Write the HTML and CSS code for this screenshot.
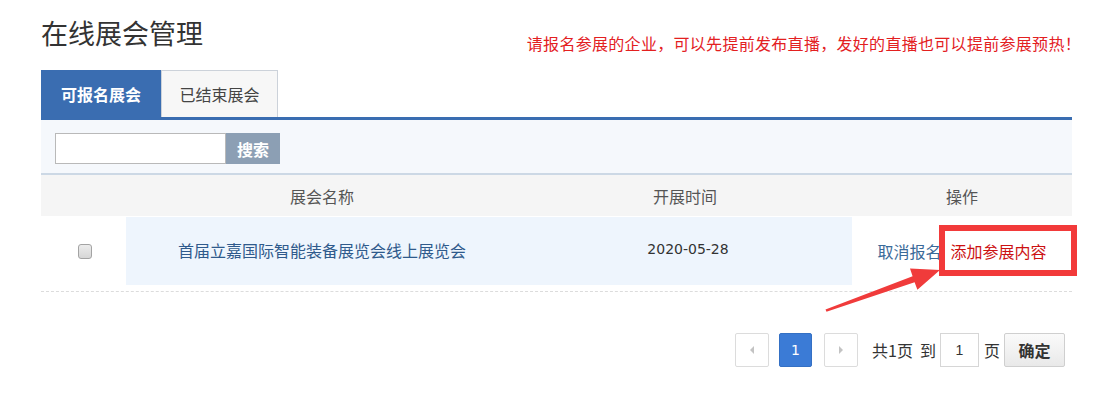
FILE: index.html
```html
<!DOCTYPE html>
<html lang="zh-CN">
<head>
<meta charset="utf-8">
<title>在线展会管理</title>
<link rel="stylesheet" href="styles.css">
</head>
<body>
<div class="page">
  <div class="head">
    <h1 class="title">在线展会管理</h1>
    <p class="notice">请报名参展的企业，可以先提前发布直播，发好的直播也可以提前参展预热！</p>
  </div>
  <div class="tabs">
    <a class="tab tab-active">可报名展会</a>
    <a class="tab">已结束展会</a>
  </div>
  <div class="search">
    <input class="search-input" type="text">
    <button class="search-btn" type="button">搜索</button>
  </div>
  <div class="table">
    <div class="thead">
      <div class="cell"></div>
      <div class="cell">展会名称</div>
      <div class="cell">开展时间</div>
      <div class="cell">操作</div>
    </div>
    <div class="trow">
      <div class="cell"><input class="check" type="checkbox"></div>
      <div class="cell cell-tint"><a class="name-link">首届立嘉国际智能装备展览会线上展览会</a></div>
      <div class="cell cell-tint date">2020-05-28</div>
      <div class="cell ops">
        <a class="op-cancel">取消报名</a>
        <a class="op-add">添加参展内容<span class="mark"></span></a>
      </div>
    </div>
  </div>
  <div class="pager">
    <span class="pg-btn"><i class="tri tri-left"></i></span>
    <span class="pg-btn pg-cur">1</span>
    <span class="pg-btn"><i class="tri tri-right"></i></span>
    <span class="pg-text pg-total">共1页</span>
    <span class="pg-text">到</span>
    <input class="pg-input" type="text" value="1">
    <span class="pg-text">页</span>
    <button class="pg-ok" type="button">确定</button>
  </div>
  <svg class="arrow" width="160" height="80" viewBox="0 0 160 80">
    <polygon points="25.5,59.4 112.6,26.2 110,18.6 140,20 117.4,39.8 114.6,32.2 26.5,61.8" fill="#f03b3b"/>
  </svg>
</div>
</body>
</html>
```
FILE: styles.css
```css
* { box-sizing: border-box; }
html, body { margin: 0; padding: 0; background: #fff; }
body {
  font-family: "Microsoft YaHei", "Noto Sans CJK SC", "Liberation Sans", sans-serif;
  color: #333;
  font-size: 16px;
}
.page {
  position: relative;
  width: 1120px;
  height: 400px;
  padding-left: 41px;
}
.head {
  width: 1031px;
  height: 70px;
  padding-top: 18px;
  display: flex;
  justify-content: space-between;
  align-items: flex-start;
}
.title {
  margin: 0;
  font-size: 27px;
  font-weight: normal;
  line-height: 30px;
  color: #333;
}
.notice {
  margin: 14px -9px 0 0;
  font-size: 16px;
  line-height: 22px;
  color: #e3201f;
  letter-spacing: 0.3px;
}
.tabs {
  display: flex;
  height: 47px;
}
.tab {
  display: flex;
  align-items: center;
  justify-content: center;
  font-size: 16px;
  height: 47px;
}
.tab-active {
  width: 120px;
  background: #3a6db1;
  color: #fff;
  font-weight: bold;
}
.tab:not(.tab-active) {
  width: 117px;
  background: #f7f7f7;
  border: 1px solid #ccd2da;
  border-bottom: none;
  color: #444;
}
.search {
  width: 1031px;
  background: #f5f8fc;
  border-top: 3px solid #3a6db1;
  border-bottom: 2px solid #ccd8e5;
  padding: 13px 14px 9px;
  display: flex;
}
.search-input {
  width: 171px;
  height: 31px;
  margin: 0;
  border: 1px solid #b9b9b9;
  background: #fff;
  padding: 0 4px;
}
.search-btn {
  width: 54px;
  height: 31px;
  margin: 0;
  border: none;
  background: #8c9fb4;
  color: #fff;
  font-family: inherit;
  font-size: 16px;
  font-weight: bold;
  padding: 0;
}
.table { width: 1031px; }
.thead, .trow {
  display: grid;
  grid-template-columns: 85px 392px 334px 220px;
}
.thead {
  height: 41px;
  background: #f5f5f5;
  color: #555;
}
.thead .cell {
  display: flex;
  align-items: center;
  justify-content: center;
  font-size: 16px;
}
.trow {
  padding-top: 1px;
  padding-bottom: 6px;
  border-bottom: 1px dashed #dcdcdc;
}
.trow .cell {
  height: 68px;
  display: flex;
  align-items: center;
  justify-content: center;
}
.cell-tint { background: #eef5fd; }
.check {
  appearance: none;
  -webkit-appearance: none;
  margin: 1px 0 0 3px;
  width: 14px;
  height: 15px;
  border: 1px solid #a3a3a3;
  border-radius: 3px;
  background: linear-gradient(#ececec, #d6d6d6);
}
.name-link {
  color: #2f5a8c;
  font-size: 16px;
  margin-top: -2px;
}
.date {
  font-family: "DejaVu Sans", "Liberation Sans", sans-serif;
  font-size: 14px;
  color: #333;
  padding-left: 6px;
  padding-bottom: 4px;
}
.ops {
  gap: 9px;
  font-size: 16px;
}
.op-cancel { color: #3a6a99; }
.op-add {
  position: relative;
  color: #cc1111;
  line-height: 20px;
}
.mark {
  position: absolute;
  left: -12px;
  top: -16px;
  width: 138px;
  height: 51px;
  border: 6px solid #f23a3a;
}
.pager {
  width: 1031px;
  margin-top: 41px;
  padding-right: 7px;
  display: flex;
  justify-content: flex-end;
  align-items: center;
  height: 34px;
}
.pg-btn {
  width: 34px;
  height: 34px;
  border: 1px solid #dcdcdc;
  border-radius: 2px;
  background: #fff;
  display: flex;
  align-items: center;
  justify-content: center;
  margin-right: 10px;
  font-family: "DejaVu Sans", "Liberation Sans", sans-serif;
  font-size: 14px;
}
.pg-cur {
  width: 33px;
  background: #3b7bd6;
  border-color: #3470c4;
  color: #fff;
  margin-right: 12px;
}
.tri {
  width: 0;
  height: 0;
  border-top: 4px solid transparent;
  border-bottom: 4px solid transparent;
}
.tri-left { border-right: 4px solid #c3c3c3; }
.tri-right { border-left: 4px solid #c3c3c3; }
.pg-text {
  font-size: 16px;
  color: #333;
  margin-right: 4px;
}
.pg-total { margin-left: 4px; margin-right: 7px; }
.pg-input {
  width: 39px;
  height: 34px;
  margin: 0 5px 0 0;
  border: 1px solid #d6d6d6;
  text-align: center;
  font-size: 14px;
  font-family: "Liberation Sans", sans-serif;
  color: #333;
  padding: 0;
}
.pg-ok {
  width: 61px;
  height: 34px;
  margin: 0;
  border: 1px solid #cfcfcf;
  border-radius: 2px;
  background: linear-gradient(#fafafa, #e9e9e9);
  font-family: inherit;
  font-size: 16px;
  font-weight: bold;
  color: #333;
  padding: 0;
}
.arrow {
  position: absolute;
  left: 800px;
  top: 250px;
}
```
